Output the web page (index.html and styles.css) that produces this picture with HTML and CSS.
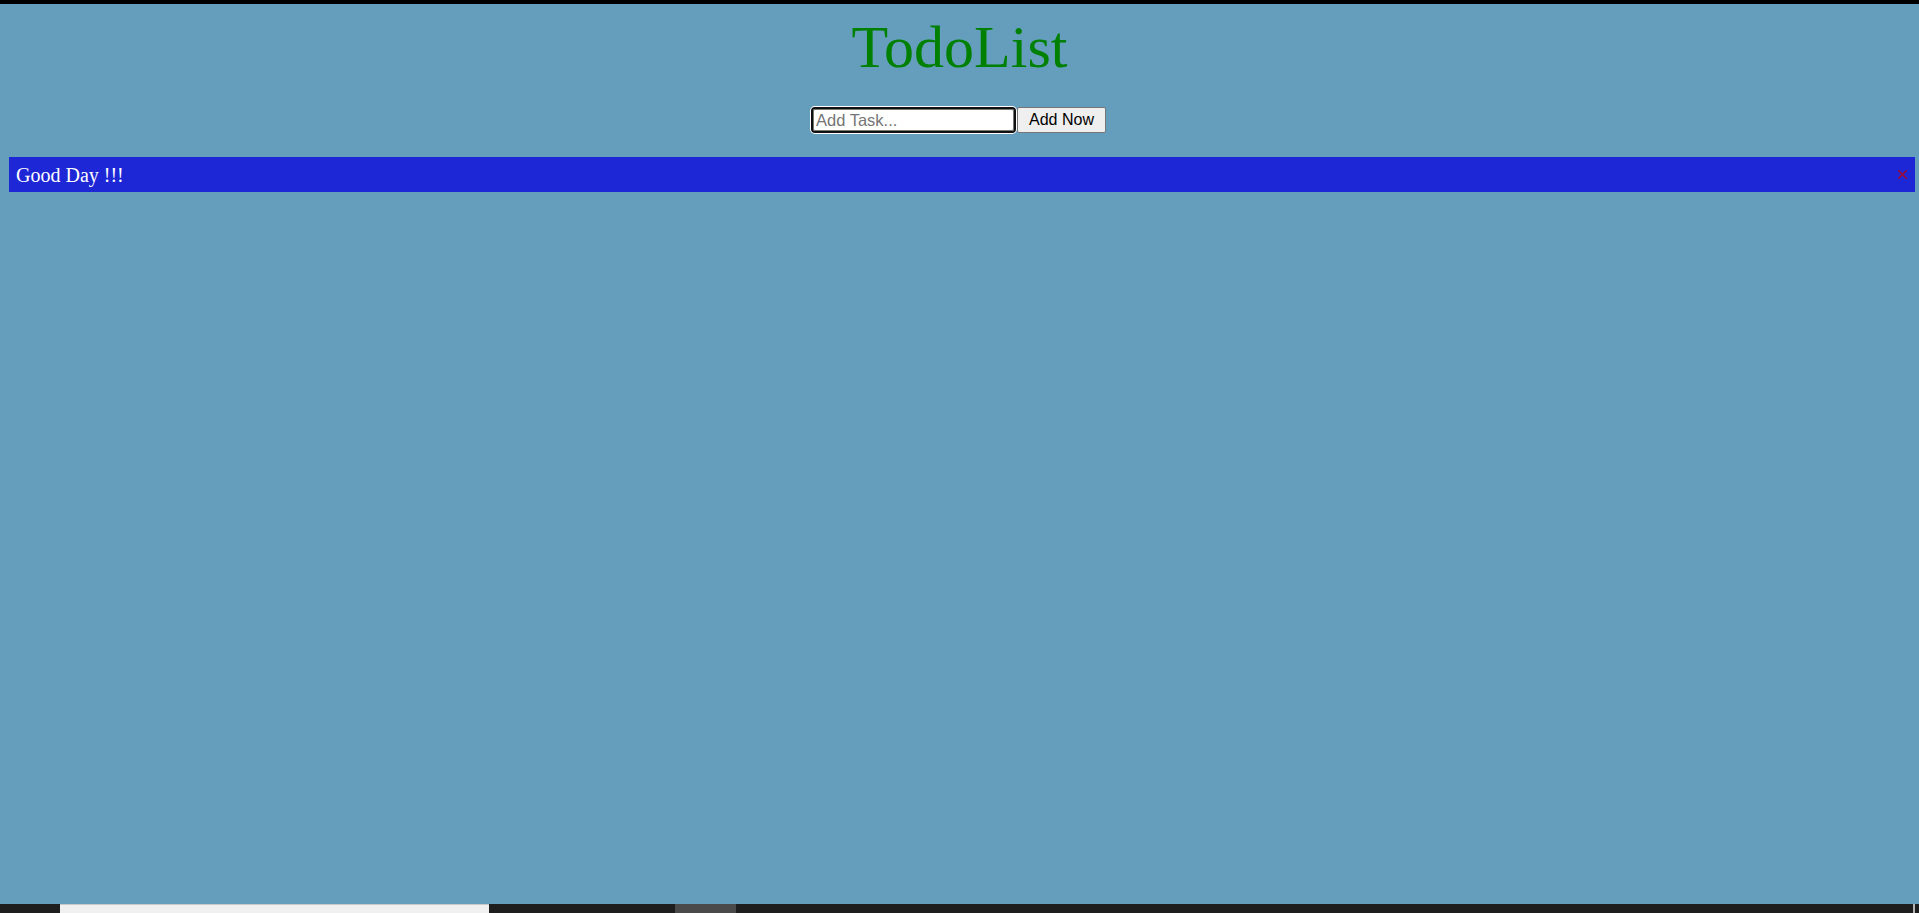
FILE: index.html
```html
<!DOCTYPE html>
<html lang="en">
<head>
<meta charset="utf-8">
<title>TodoList</title>
<link rel="stylesheet" href="styles.css">
</head>
<body>
<div class="topbar"></div>
<h1 class="title">TodoList</h1>
<div class="form-row">
  <input class="task-input" type="text" placeholder="Add Task...">
  <button class="add-btn" type="button">Add Now</button>
</div>
<ul class="list">
  <li class="item">
    <span class="item-text">Good Day !!!</span>
    <svg class="close" width="9" height="9" viewBox="0 0 9 9" aria-hidden="true">
      <path d="M0.8 0.8 L8.2 8.2 M8.2 0.8 L0.8 8.2" stroke="#9a0a3a" stroke-width="1.6" stroke-linecap="square"/>
    </svg>
  </li>
</ul>
<div class="spacer"></div>
<div class="bottombar">
  <span class="seg seg-dark" style="width:60px"></span>
  <span class="seg seg-white" style="width:429px"></span>
  <span class="seg seg-dark" style="width:186px"></span>
  <span class="seg seg-gray" style="width:61px"></span>
  <span class="seg seg-dark seg-fill"></span>
  <span class="seg seg-line" style="width:2px"></span>
  <span class="seg seg-dark" style="width:4px"></span>
</div>
</body>
</html>
```

FILE: styles.css
```css
html, body {
  margin: 0;
  padding: 0;
}

body {
  background: #649ebc;
  min-height: 100vh;
  display: flex;
  flex-direction: column;
  font-family: "Liberation Serif", "Times New Roman", serif;
  overflow: hidden;
}

.topbar {
  height: 4px;
  background: #000;
  flex: none;
}

.title {
  margin: 10px 0 0;
  font-family: "Liberation Serif", "Times New Roman", serif;
  font-weight: normal;
  font-size: 60px;
  line-height: 66px;
  color: #008000;
  text-align: center;
}

.form-row {
  margin-top: 27px;
  display: flex;
  justify-content: center;
  align-items: center;
  gap: 3px;
}

.task-input {
  box-sizing: border-box;
  width: 201px;
  height: 22px;
  padding: 1px 2px;
  border: 1px solid #767676;
  border-radius: 2px;
  outline: 2px solid #101010;
  box-shadow: 0 0 0 3px #ffffff;
  background: #fff;
  font-family: "Liberation Sans", Arial, sans-serif;
  font-size: 16.5px;
  color: #000;
}

.task-input::placeholder {
  color: #757575;
}

.add-btn {
  box-sizing: border-box;
  height: 26px;
  padding: 0 11px;
  border: 1px solid #767676;
  border-radius: 2px;
  background: #efefef;
  font-family: "Liberation Sans", Arial, sans-serif;
  font-size: 16px;
  color: #000;
}

.list {
  list-style: none;
  margin: 24px 4px 0 9px;
  padding: 0;
}

.item {
  display: flex;
  align-items: center;
  justify-content: space-between;
  height: 35px;
  box-sizing: border-box;
  padding: 0 8px 0 7px;
  background: #1e27d6;
  color: #fff;
  font-size: 20px;
}

.item-text {
  line-height: 23px;
  padding-top: 1px;
}

.close {
  display: block;
}

.spacer {
  flex: 1;
}

.bottombar {
  flex: none;
  height: 9px;
  display: flex;
}

.seg {
  display: block;
  height: 100%;
  flex: none;
}

.seg-dark {
  background: #1e1e1e;
}

.seg-fill {
  flex: 1;
}

.seg-white {
  background: #f0f0f0;
  box-shadow: inset 0 1px 0 #c8c8c8;
}

.seg-gray {
  background: #4a4a4a;
}

.seg-line {
  background: #b4b4b4;
}
```
